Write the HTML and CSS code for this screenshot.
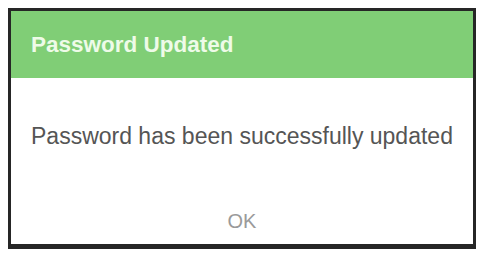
FILE: index.html
```html
<!DOCTYPE html>
<html>
<head>
<meta charset="utf-8">
<link rel="stylesheet" href="styles.css">
</head>
<body>
<div class="dialog">
  <div class="dialog-header">
    <span class="dialog-title">Password Updated</span>
  </div>
  <div class="dialog-body">
    <p class="dialog-message">Password has been successfully updated</p>
  </div>
  <div class="dialog-footer">
    <span class="dialog-ok">OK</span>
  </div>
</div>
</body>
</html>
```

FILE: styles.css
```css
html, body {
  margin: 0;
  padding: 0;
  background: #ffffff;
}
body {
  padding: 8px;
  font-family: "Liberation Sans", Arial, sans-serif;
}
.dialog {
  box-sizing: border-box;
  width: 468px;
  height: 241px;
  border: 3px solid #262626;
  border-bottom-width: 5px;
  background: #ffffff;
  display: flex;
  flex-direction: column;
}
.dialog-header {
  height: 67px;
  background: #80ce76;
  display: flex;
  align-items: center;
  padding-left: 20px;
  flex-shrink: 0;
}
.dialog-title {
  color: #eefbe8;
  font-weight: bold;
  font-size: 22.5px;
}
.dialog-body {
  padding: 44px 0 0 20px;
}
.dialog-message {
  margin: 0;
  font-size: 23px;
  line-height: 28px;
  color: #555555;
}
.dialog-footer {
  margin-top: auto;
  padding-bottom: 11px;
  display: flex;
  justify-content: center;
}
.dialog-ok {
  font-size: 20px;
  line-height: 24px;
  color: #9a9a9a;
}
```
